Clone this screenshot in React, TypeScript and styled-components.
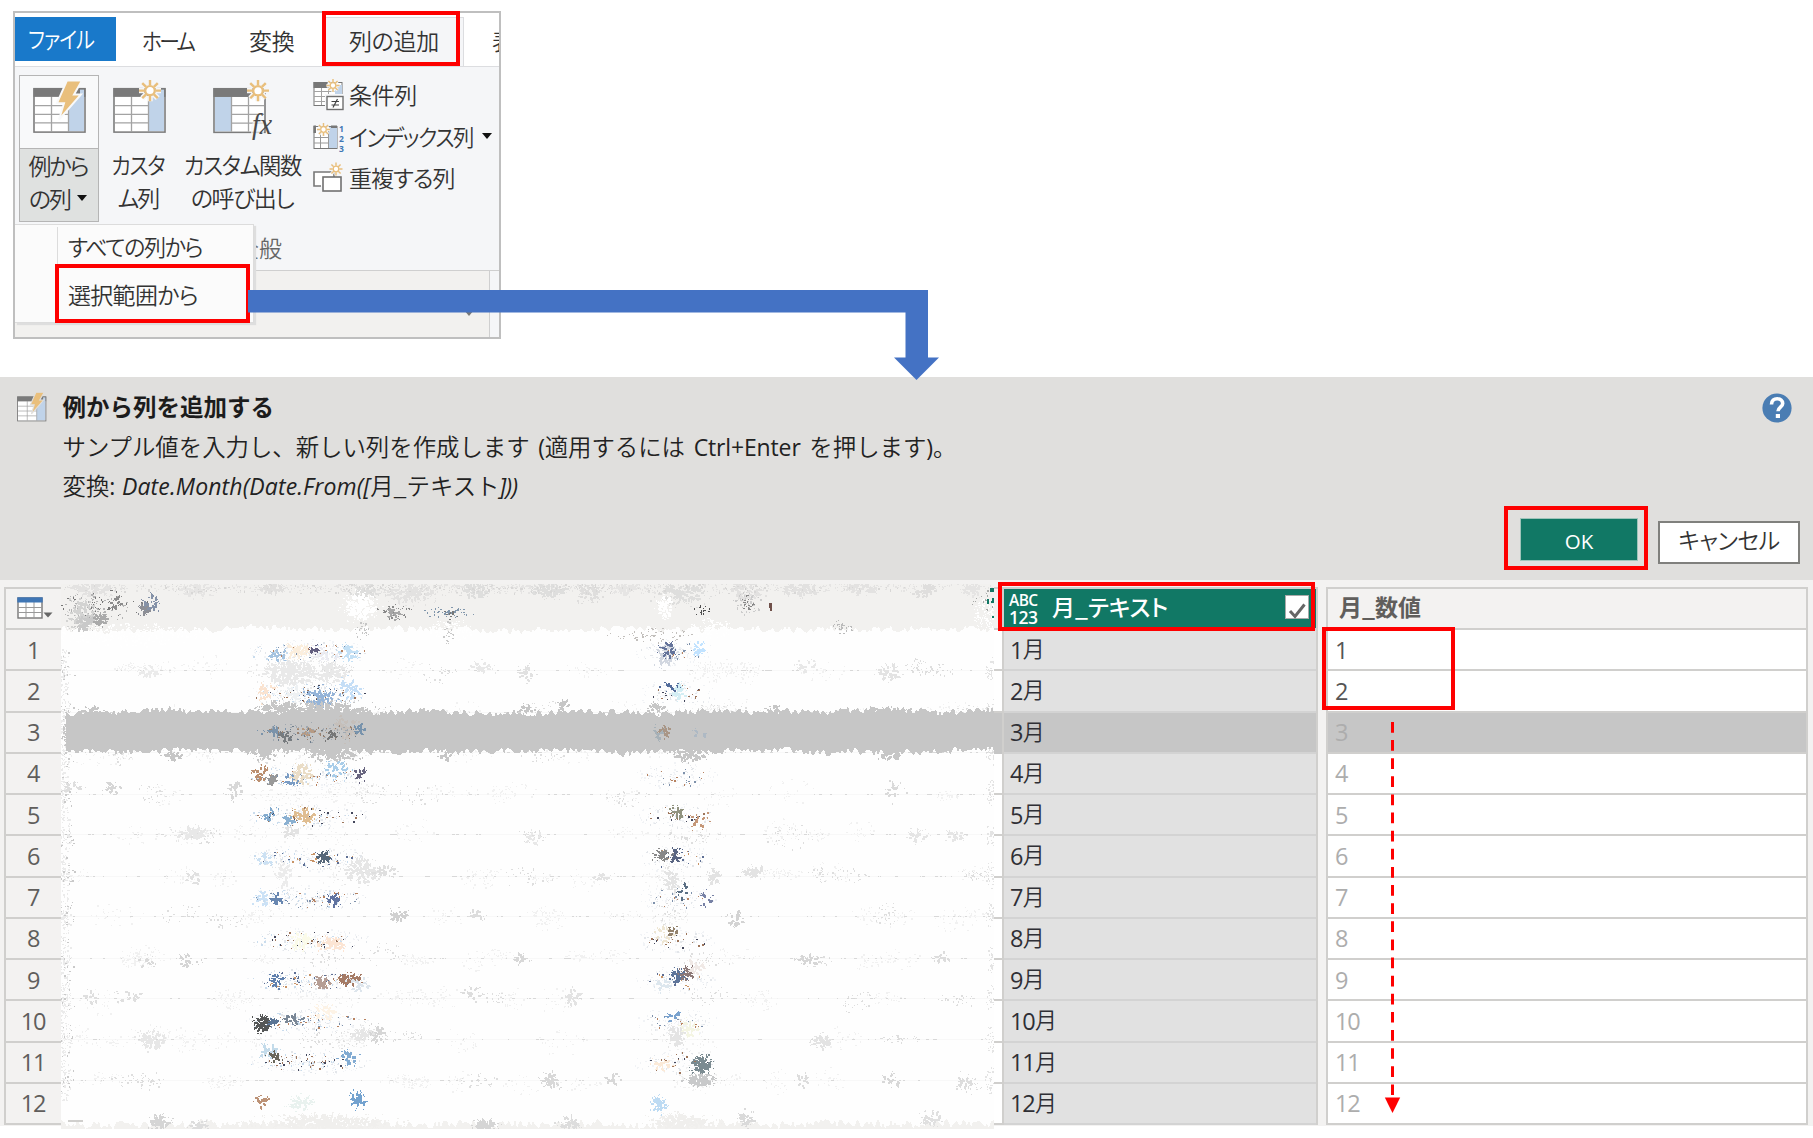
import React from "react";
import styled, { createGlobalStyle, css } from "styled-components";

const GlobalStyle = createGlobalStyle`
  * { box-sizing: border-box; }
  body { margin: 0; background: #fff; }
`;

const jp = `"Noto Sans CJK JP"`;
const ui = `"Open Sans", ${jp}, sans-serif`;

const Page = styled.div`
  position: relative;
  width: 1813px;
  height: 1138px;
  overflow: hidden;
  background: #fff;
  color: #333;
  font: 23px/32px ${jp}, sans-serif;
`;

const Label = styled.span<{ $ls?: number; $size?: number; $sx?: number; $center?: boolean }>`
  display: block;
  white-space: nowrap;
  font-weight: 350;
  font-size: ${(p) => p.$size ?? 23}px;
  letter-spacing: ${(p) => p.$ls ?? 0}px;
  font-feature-settings: "palt";
  ${(p) => p.$sx && css`transform: scaleX(${p.$sx}); transform-origin: ${p.$center ? "center" : "left"};`}
`;

const Marker = styled.div<{ $x: number; $y: number; $w: number; $h: number }>`
  position: absolute;
  left: ${(p) => p.$x}px;
  top: ${(p) => p.$y}px;
  width: ${(p) => p.$w}px;
  height: ${(p) => p.$h}px;
  border: 4px solid #fe0000;
  z-index: 3;
`;

const Overlay = styled.svg<{ $x: number; $y: number }>`
  position: absolute;
  left: ${(p) => p.$x}px;
  top: ${(p) => p.$y}px;
  z-index: 4;
`;

/* ---------- ribbon ---------- */

const Top = styled.section`
  height: 377px;
  padding: 11px 0 0 13px;
`;

const Ribbon = styled.div`
  position: relative;
  display: flex;
  flex-direction: column;
  width: 488px;
  height: 328px;
  border: 2px solid #bfbfbf;
  background: #f5f6f8;
  overflow: hidden;
`;

const Tabs = styled.div`
  display: flex;
  height: 54px;
  padding-top: 4px;
  background: #fff;
  border-bottom: 1px solid #dcdde0;
  overflow: hidden;
  flex: none;
`;

const Tab = styled.div<{ $w: number; $pad: number; $kind?: "file" | "active" }>`
  flex: none;
  width: ${(p) => p.$w}px;
  height: 50px;
  padding: 7px 0 0 ${(p) => p.$pad}px;
  ${(p) =>
    p.$kind === "file" &&
    css`height: 44px; padding-top: 5px; background: #1979ca; color: #fff;`}
  ${(p) =>
    p.$kind === "active" &&
    css`background: #f5f6f8; border: 1px solid #dcdde0; border-bottom: 0; padding-top: 6px;`}
`;

const Tools = styled.div`
  display: flex;
  height: 157px;
  padding: 8px 0 0 4px;
  flex: none;
`;

const Big = styled.div<{ $w: number; $selected?: boolean }>`
  display: flex;
  flex-direction: column;
  align-items: center;
  width: ${(p) => p.$w}px;
  height: 147px;
  border: 1px solid ${(p) => (p.$selected ? "#b5b5b5" : "transparent")};
  background: ${(p) => (p.$selected ? "#f8f9fa" : "transparent")};
  flex: none;
`;

const BigIcon = styled.div`
  height: 72px;
  padding: 4px 0 0 1px;
`;

const BigText = styled.div<{ $selected?: boolean }>`
  display: flex;
  flex-direction: column;
  align-items: center;
  align-self: stretch;
  height: 74px;
  line-height: 33px;
  padding-right: 2px;
  ${(p) => p.$selected && css`background: #dfe1e0; border-top: 1px solid #b5b5b5;`}
`;

const WithCaret = styled.div<{ $gap?: number }>`
  display: flex;
  align-items: center;
  gap: ${(p) => p.$gap ?? 7}px;
`;

const Caret = styled.i<{ $color?: string }>`
  width: 0;
  height: 0;
  border: 5px solid transparent;
  border-top: 6px solid ${(p) => p.$color ?? "#111"};
  border-bottom: 0;
`;

const SmallList = styled.div`
  display: flex;
  flex-direction: column;
  padding: 0 0 0 6px;
`;

const SmallItem = styled.div`
  display: flex;
  align-items: center;
  gap: 4px;
  height: 41.5px;

  & > svg {
    flex: none;
  }

  & > :not(svg) {
    margin-top: -3px;
  }
`;

const GroupName = styled.div`
  height: 47px;
  padding: 7px 0 0 221px;
  color: #666;
  border-bottom: 1px solid #cfcfcf;
  flex: none;
`;

const SheetStrip = styled.div`
  flex: 1;
  margin-right: 9px;
  padding: 39px 15px 0 0;
  display: flex;
  justify-content: flex-end;
  background: #f2f1ef;
  border-right: 1px solid #cfcfcf;
`;

const Menu = styled.div`
  position: absolute;
  left: 0;
  top: 211px;
  width: 239px;
  height: 99px;
  background: #fbfbfb;
  border: 1px solid #dcdcdc;
  border-left: 0;
  box-shadow: 2px 2px 1px #dedede;
  display: flex;
`;

const MenuGutter = styled.div`
  width: 43px;
  margin-top: 2px;
  border-right: 1px solid #dcdcdc;
`;

const MenuItems = styled.div`
  padding: 5px 0 0 10px;
`;

const MenuItem = styled.div`
  height: 48px;
`;

/* ---------- dialog panel ---------- */

const Panel = styled.section`
  display: flex;
  height: 203px;
  padding: 15px 13px 0 17px;
  background: #e0dfdd;
  color: #222;
`;

const PanelText = styled.div`
  margin: -2px 0 0 15.5px;
  flex: 1;
  font-family: ${jp}, sans-serif;
`;

const PanelTitle = styled.div`
  font: 700 23.5px/32px ${jp}, sans-serif;
  color: #1c1c1c;
`;

const PanelLine = styled.div`
  margin-top: 7.5px;
  height: 32px;
  white-space: nowrap;
  font-size: 23.4px;
  font-weight: 350;
  word-spacing: 3.5px;
`;

const Latin = styled.span<{ $ls?: number; $italic?: boolean }>`
  font-family: ${ui};
  font-weight: 400;
  font-size: 23px;
  letter-spacing: ${(p) => p.$ls ?? 0}px;
  font-style: ${(p) => (p.$italic ? "italic" : "normal")};
`;

const PanelSide = styled.div`
  display: flex;
  flex-direction: column;
  align-items: flex-end;
  padding-top: 1px;
`;

const HelpIcon = styled.div`
  margin-right: 8px;
  height: 30px;
`;

const Buttons = styled.div`
  display: flex;
  gap: 20px;
  margin-top: 95px;
`;

const Button = styled.button<{ $primary?: boolean }>`
  width: ${(p) => (p.$primary ? 118 : 142)}px;
  height: 43px;
  margin-top: ${(p) => (p.$primary ? 0 : 3)}px;
  padding: 0 0 5px;
  border: ${(p) => (p.$primary ? "1px solid #9fc4ba" : "2px solid #80807d")};
  background: ${(p) => (p.$primary ? "#117865" : "#fff")};
  color: ${(p) => (p.$primary ? "#fff" : "#333")};
  font: 20.5px/32px ${ui};
  display: flex;
  justify-content: center;
  align-items: center;
  ${(p) => p.$primary && css`padding: 3px 0 0;`}
`;

/* ---------- data grid ---------- */

const Grid = styled.section`
  display: flex;
  height: 549px;
  padding: 7px 0 0 4px;
  background: linear-gradient(#f3f2f1 0 546px, #fff 546px);
`;

const Column = styled.div<{ $w: number }>`
  display: flex;
  flex-direction: column;
  flex: none;
  width: ${(p) => p.$w}px;
  height: 538px;
  border: 2px solid #d0cfcd;
  border-bottom-width: 0;
`;

const NumberColumn = styled(Column)`
  border-right: 0;
`;

const StubColumn = styled(Column)`
  border-left: 0;
  border-right: 0;
`;

const ValueColumn = styled(Column)`
  margin-left: 8px;
`;

const HeadCell = styled.div<{ $green?: boolean }>`
  display: flex;
  align-items: center;
  height: 41px;
  flex: none;
  border-bottom: 2px solid #d0cfcd;
  ${(p) => p.$green && css`background: #117865; color: #fff;`}
`;

const GutterIcon = styled.div`
  display: flex;
  padding-left: 11px;
`;

const Cell = styled.div<{ $bg: string; $line?: string; $color?: string; $center?: boolean; $pad?: number }>`
  flex: 1;
  display: flex;
  align-items: center;
  justify-content: ${(p) => (p.$center ? "center" : "flex-start")};
  padding-left: ${(p) => p.$pad ?? 0}px;
  padding-right: ${(p) => (p.$center ? 1 : 0)}px;
  border-bottom: 2px solid ${(p) => p.$line ?? "#d0cfcd"};
  background: ${(p) => p.$bg};
  color: ${(p) => p.$color ?? "#2f2f35"};
`;

const Num = styled.span`
  font: 23.5px/32px ${ui};
  letter-spacing: -1.2px;
`;

const Month = styled.span`
  margin: -5px 0 0 0.5px;
  font-size: 22px;
  font-weight: 350;
`;

const TypeTag = styled.div`
  width: 32px;
  margin-left: 5px;
  padding-top: 1px;
`;

const TypeLine = styled.div<{ $digits?: boolean }>`
  height: ${(p) => (p.$digits ? 18 : 15)}px;
  font: 600 ${(p) => (p.$digits ? 17.5 : 15.5)}px/${(p) => (p.$digits ? 18 : 15)}px ${ui};
  letter-spacing: ${(p) => (p.$digits ? -0.5 : -0.6)}px;
`;

const HeadName = styled.div<{ $bold?: boolean }>`
  flex: 1;
  margin-left: 11px;
  padding-bottom: 5px;
  white-space: nowrap;
  font: ${(p) => (p.$bold ? 700 : 500)} 23px/32px ${jp}, sans-serif;
  color: ${(p) => (p.$bold ? "#605e5c" : "#fff")};
  font-feature-settings: "palt";
`;

const Check = styled.div`
  width: 24px;
  height: 24px;
  margin: 0 7px 3px 0;
  background: #fff;
  border: 1px solid #aaa;
`;

const Scrub = styled.svg`
  display: block;
  flex: none;
  margin-top: -3px;
`;

/* ---------- icons ---------- */

const Burst = ({ x, y, r, bg = "#f5f6f8" }: { x: number; y: number; r: number; bg?: string }) => {
  const rays = Array.from({ length: 8 }, (_, i) => {
    const a = (i * Math.PI) / 4;
    const c = Math.cos(a);
    const s = Math.sin(a);
    return `M${x + c * r * 0.5} ${y + s * r * 0.5}L${x + c * r} ${y + s * r}`;
  }).join("");
  return (
    <g fill="none">
      <path d={rays} stroke={bg} strokeWidth={r * 0.5} />
      <circle cx={x} cy={y} r={r * 0.45} fill={bg} />
      <path d={rays} stroke="#e9bf7c" strokeWidth={r * 0.22} />
      <circle cx={x} cy={y} r={r * 0.43} stroke="#e9bf7c" strokeWidth={r * 0.2} fill="#fff" />
    </g>
  );
};

const TableShape = ({ left }: { left?: boolean }) => (
  <g>
    <rect x="1" y="9" width="51" height="45" fill="#fff" />
    <rect x={left ? 2 : 35} y="17" width="16" height="36" fill="#c0d3e9" />
    <path
      d={left ? "M18 26.5H51M18 35.5H51M18 44.5H51M18.5 17V53M35.5 17V53" : "M2 26.5H35M2 35.5H35M2 44.5H35M18.5 17V53M35.5 17V53"}
      stroke="#a3a3a3"
      strokeWidth="1.3"
    />
    <rect x="1" y="9" width="51" height="45" fill="none" stroke="#7c7c7c" strokeWidth="1.6" />
    <rect x="0.5" y="8.5" width="52" height="9" fill="#7a7a7a" />
  </g>
);

const Bolt = ({ bg = "#f8f9fa" }: { bg?: string }) => (
  <path d="M34 0.500H49L41 15H48L26 41L31 24H24Z" fill="#e9bf7c" stroke={bg} strokeWidth="2" />
);

const BoltTable = ({ size = 54, bg }: { size?: number; bg?: string }) => (
  <svg width={size} height={(size * 55) / 54} viewBox="0 0 54 57" preserveAspectRatio="none">
    <TableShape />
    <rect x="47" y="10" width="4" height="9" fill="#c0d3e9" />
    <Bolt bg={bg} />
  </svg>
);

const BurstTable = () => (
  <svg width="54" height="55" viewBox="0 0 54 57" preserveAspectRatio="none">
    <TableShape />
    <rect x="36" y="10" width="15" height="12" fill="#c0d3e9" />
    <Burst x={37} y={11} r={11} />
  </svg>
);

const FxText = styled.text`
  font: italic 30px "Liberation Serif", serif;
  fill: #4a4a4a;
`;

const IndexText = styled.text`
  font: 700 8.5px "Open Sans", sans-serif;
  fill: #3f76b5;
`;

const FxTable = () => (
  <svg width="61" height="64" viewBox="0 0 61 66" preserveAspectRatio="none">
    <TableShape left />
    <Burst x={45} y={11} r={11} />
    <path d="M38 66V48l5-11h8v29z" fill="#f5f6f8" opacity="0.7" />
    <FxText x="39" y="56" textLength="20" lengthAdjust="spacingAndGlyphs">fx</FxText>
  </svg>
);

const ConditionIcon = () => (
  <svg width="32" height="33" viewBox="0 0 32 33">
    <rect x="1" y="3.500" width="28" height="23" fill="#fff" stroke="#777" />
    <path d="M1 12.500H28M1 17.500H28M1 22.500H28M8.500 8V26M15.500 8V26" stroke="#a3a3a3" />
    <rect x="22" y="6" width="7" height="10" fill="#c0d3e9" />
    <rect x="0.500" y="3" width="14" height="6" fill="#777" />
    <Burst x={20} y={6.500} r={6.500} />
    <rect x="13" y="16" width="18" height="16" fill="#fff" stroke="#f5f6f8" strokeWidth="2" />
    <rect x="14" y="17.500" width="16" height="13" fill="#fff" stroke="#707070" strokeWidth="1.400" />
    <path d="M18.500 22.500H26M18.500 26H26M24.500 20L20 28.500" stroke="#444" strokeWidth="1.200" />
  </svg>
);

const IndexIcon = () => (
  <svg width="32" height="33" viewBox="0 0 32 33">
    <rect x="1" y="5.500" width="23" height="22" fill="#fff" stroke="#777" />
    <rect x="16" y="6" width="8" height="21" fill="#c0d3e9" />
    <path d="M1 16.500H16M1 22H16M7.500 10V27M15.500 10V27" stroke="#999" />
    <path d="M0.500 4.500H3V12H0.500ZM18 4.500H24V7H18Z" fill="#777" />
    <Burst x={10.500} y={8.500} r={6.500} />
    <IndexText x="26" y="10.500">1</IndexText>
    <IndexText x="26" y="20.500">2</IndexText>
    <IndexText x="26" y="30.500">3</IndexText>
  </svg>
);

const DuplicateIcon = () => (
  <svg width="32" height="33" viewBox="0 0 32 33">
    <path d="M8 24H1V10H21V16" fill="#fff" stroke="#777" strokeWidth="1.600" />
    <rect x="10" y="15" width="18" height="14" fill="#fff" stroke="#707070" strokeWidth="1.600" />
    <Burst x={23} y={7} r={6.500} />
  </svg>
);

const GridIcon = () => (
  <svg width="36" height="24" viewBox="0 0 36 24">
    <rect x="1" y="1" width="24" height="20" fill="#fff" stroke="#777" strokeWidth="1.400" />
    <path d="M1 10.500H25M1 15.500H25M9 5V21M17 5V21" stroke="#999" />
    <rect x="0.300" y="0.300" width="25.400" height="5.200" fill="#3f76b5" />
    <path d="M26.500 15.500H35.500L31 20.500Z" fill="#666" />
  </svg>
);

/* ---------- scrubbed region ---------- */

const lines = [629, 670, 712, 752, 794, 834, 876, 916, 958, 998, 1039, 1080];

function makeRandom(seed: number) {
  let s = seed;
  return () => {
    s = (s * 1664525 + 1013904223) >>> 0;
    return s / 4294967296;
  };
}

type Blob = [x: number, y: number, rx: number, ry: number, n: number, color: string];

/* scattered pixels, denser toward the centre of the spot */
function specks([x, y, rx, ry, n]: Blob, rnd: () => number) {
  let d = "";
  for (let i = 0; i < n; i++) {
    const a = rnd() * Math.PI * 2;
    const r = Math.pow(rnd(), 0.7);
    const px = Math.round(x + Math.cos(a) * rx * r);
    const py = Math.round(y + Math.sin(a) * ry * r);
    const w = rnd() > 0.7 ? 2 : 1;
    const h = rnd() > 0.7 ? 2 : 1;
    d += `M${px} ${py}h${w}v${h}h${-w}z`;
  }
  return d;
}

/* ragged flake: thin branches of small squares around the centre, with loose crumbs */
function flake(blob: Blob, rnd: () => number) {
  const [x, y, rx, ry, n] = blob;
  let d = "";
  for (let i = 0; i < n; i++) {
    const a = rnd() * Math.PI * 2;
    const r = Math.pow(rnd(), 0.75) * 0.8;
    let px = x + Math.cos(a) * rx * r;
    let py = y + Math.sin(a) * ry * r;
    const dir = a + (rnd() - 0.5) * 1.4;
    const steps = 2 + Math.floor(rnd() * 3);
    for (let t = 0; t < steps; t++) {
      const w = t < 2 ? 2 : 1;
      d += `M${Math.round(px)} ${Math.round(py)}h${w}v${w}h${-w}z`;
      px += Math.cos(dir) * 1.2;
      py += Math.sin(dir) * 1.2;
    }
  }
  return d + specks([x, y, rx * 1.35, ry * 1.3, Math.round(n * 0.7), ""], rnd);
}

function jagged(y0: number, y1: number, amp: number, rnd: () => number, left = 61) {
  const edge = (y: number) => {
    const pts: string[] = [];
    let drift = 0;
    for (let x = left; x <= 996; x += 2) {
      drift = drift * 0.93 + (rnd() - 0.5) * 1.4;
      pts.push(`${x} ${(y + drift + (rnd() - 0.5) * amp).toFixed(1)}`);
    }
    return pts;
  };
  return `M${edge(y0).join("L")}L${edge(y1).reverse().join("L")}Z`;
}

const flakes: Blob[] = [
  [290, 672, 32, 14, 190, "#e9e9e9"], [330, 672, 18, 11, 70, "#e9e9e9"],
  [82, 613, 16, 15, 60, "#d3d3d2"], [85, 622, 11, 8, 34, "#c9c9c9"], [99, 619, 9, 6, 20, "#aaa"],
  [115, 602, 6, 7, 9, "#8b8b8b"], [143, 609, 6, 5, 18, "#8d8f96"], [151, 602, 8, 9, 17, "#8592a8"],
  [360, 606, 17, 14, 110, "#fff"], [393, 613, 7, 6, 13, "#a6a6a6"], [665, 606, 8, 12, 40, "#fff"],
  [277, 654, 10, 6, 14, "#a5c3e0"], [296, 650, 13, 9, 34, "#fbeedd"], [313, 650, 6, 5, 10, "#615d7e"],
  [325, 653, 16, 8, 22, "#ececf2"],
  [347, 652, 11, 8, 22, "#c3e0f5"], [266, 692, 11, 10, 19, "#fae3d0"],
  [320, 697, 18, 11, 58, "#95b4d8"], [350, 688, 12, 12, 26, "#c5def6"], [293, 694, 10, 12, 22, "#eef1f3"],
  [260, 773, 9, 7, 22, "#bb8f70"], [271, 779, 6, 5, 14, "#999"], [291, 779, 10, 6, 19, "#7a9cc4"],
  [302, 773, 11, 11, 34, "#eaddc7"], [336, 769, 12, 10, 20, "#a9cde9"], [359, 774, 6, 8, 9, "#696680"],
  [303, 815, 11, 8, 34, "#dfbd91"], [289, 819, 7, 6, 12, "#8ab0d1"], [269, 813, 8, 7, 10, "#82aacd"],
  [323, 857, 6, 7, 20, "#566779"], [264, 858, 10, 6, 13, "#cce1f3"], [360, 870, 20, 14, 84, "#e6e6e6"],
  [385, 871, 17, 6, 22, "#dfdfdf"], [283, 873, 8, 17, 34, "#ececec"],
  [276, 898, 8, 6, 12, "#6887b1"], [262, 898, 9, 8, 17, "#cce2f6"], [333, 900, 6, 7, 14, "#6073a0"],
  [330, 943, 16, 7, 36, "#fce5d4"], [300, 940, 14, 9, 30, "#fbfbe9"], [275, 979, 8, 7, 14, "#6080ad"],
  [321, 982, 9, 7, 20, "#b59e95"], [348, 979, 13, 6, 38, "#a57b66"], [360, 983, 12, 9, 16, "#dde5ec"],
  [261, 1023, 9, 9, 38, "#555757"], [272, 1022, 6, 3, 9, "#5b7595"], [293, 1019, 10, 6, 13, "#7a8796"],
  [325, 1012, 14, 8, 22, "#fdf3e6"],
  [266, 1050, 12, 12, 20, "#c3dbea"], [274, 1057, 7, 6, 12, "#69675b"], [348, 1057, 9, 7, 19, "#82abd2"],
  [357, 1100, 9, 9, 30, "#73a2cf"], [260, 1101, 7, 6, 10, "#bc9276"], [300, 1102, 14, 8, 26, "#e9f2ef"],
  [664, 654, 13, 11, 34, "#d2d7e0"], [668, 650, 9, 8, 14, "#64739a"], [698, 648, 7, 9, 16, "#c2e3ff"],
  [670, 687, 9, 5, 8, "#536c9b"], [678, 693, 8, 10, 18, "#d3eef4"],
  [676, 812, 6, 7, 16, "#91937f"], [698, 819, 11, 9, 9, "#c59778"],
  [664, 855, 11, 6, 20, "#888"], [674, 855, 6, 7, 14, "#596582"], [671, 880, 9, 14, 34, "#e4e4e4"],
  [681, 890, 7, 10, 6, "#5b6f84"], [704, 896, 9, 10, 7, "#7781a5"],
  [664, 934, 11, 8, 14, "#eee6d3"], [672, 931, 5, 5, 7, "#92826d"],
  [678, 974, 8, 7, 18, "#5e759a"], [687, 973, 10, 7, 17, "#8d7978"], [663, 984, 9, 6, 16, "#dde7ee"],
  [696, 966, 10, 8, 20, "#f0e9e6"],
  [673, 1015, 8, 8, 9, "#7aa2ce"], [676, 1034, 10, 12, 40, "#e4e4e4"], [689, 1028, 9, 9, 18, "#f4f5e3"],
  [701, 1064, 10, 9, 52, "#7b8b91"], [700, 1079, 14, 7, 66, "#c8c9ca"],
  [661, 1063, 10, 7, 16, "#fbead8"], [658, 1104, 8, 8, 22, "#bddbf3"],
  [111, 787, 8, 6, 12, "#d6d6d6"], [72, 787, 12, 6, 12, "#dedede"], [234, 789, 9, 11, 18, "#d8d8d8"],
  [190, 833, 22, 7, 48, "#e8e8e8"], [290, 832, 8, 7, 16, "#e3e3e3"], [148, 671, 14, 5, 18, "#ebebeb"],
  [480, 668, 13, 7, 18, "#e8e8e8"], [526, 673, 8, 8, 15, "#e1e1e1"], [889, 672, 12, 9, 24, "#e3e3e3"],
  [806, 666, 10, 6, 11, "#e8e8e8"], [894, 791, 11, 10, 9, "#dadada"], [917, 835, 10, 8, 16, "#e5e5e5"],
  [955, 835, 9, 7, 13, "#e6e6e6"], [534, 837, 11, 7, 10, "#e8e8e8"], [194, 878, 10, 8, 11, "#e1e1e1"],
  [754, 871, 13, 7, 24, "#e3e3e3"], [602, 875, 11, 5, 9, "#e3e3e3"], [713, 876, 7, 8, 20, "#e3e3e3"],
  [398, 914, 9, 7, 18, "#d0d0d0"], [475, 914, 9, 5, 9, "#ddd"], [736, 919, 9, 9, 16, "#d3d3d3"],
  [188, 960, 11, 8, 12, "#d5d5d5"], [145, 962, 9, 7, 8, "#dadada"], [520, 958, 9, 6, 10, "#d8d8d8"],
  [808, 959, 12, 5, 17, "#d6d6d6"], [940, 956, 10, 6, 9, "#ddd"], [573, 997, 9, 9, 18, "#e3e3e3"],
  [90, 997, 8, 7, 9, "#dfdfdf"], [130, 996, 13, 7, 10, "#dfdfdf"], [470, 992, 9, 7, 9, "#ddd"],
  [152, 1038, 14, 10, 46, "#e7e7e7"], [376, 1033, 8, 9, 20, "#d6d6d6"], [362, 1033, 13, 8, 30, "#e6e6e6"],
  [821, 1042, 9, 8, 26, "#e3e3e3"], [550, 1080, 11, 8, 24, "#d8d8d8"], [612, 1079, 9, 6, 9, "#d8d8d8"],
  [891, 1080, 11, 7, 10, "#d8d8d8"], [964, 1081, 9, 8, 12, "#ddd"], [802, 1080, 8, 7, 9, "#ddd"],
];

const headFlakes: Blob[] = [
  [90, 588, 25, 8, 60, "#e3e2e1"], [195, 589, 18, 8, 45, "#e6e5e4"], [270, 588, 14, 6, 32, "#e0dfde"],
  [365, 590, 16, 9, 40, "#dededd"], [410, 592, 28, 10, 90, "#e3e2e1"], [475, 590, 14, 9, 40, "#dededd"],
  [550, 590, 22, 8, 55, "#dededd"], [588, 592, 12, 10, 35, "#dfdedd"], [625, 588, 15, 7, 30, "#e6e5e4"],
  [680, 593, 26, 12, 85, "#dededd"], [745, 590, 18, 10, 45, "#e2e1e0"], [800, 589, 20, 8, 50, "#e2e1e0"],
  [860, 588, 18, 6, 35, "#e3e2e1"], [925, 590, 13, 7, 30, "#dfdedd"], [970, 590, 12, 7, 25, "#e5e4e3"],
];

const footFlakes: Blob[] = [
  [160, 1122, 11, 7, 40, "#d5d5d5"], [198, 1124, 9, 5, 18, "#ddd"], [484, 1124, 13, 5, 34, "#d5d5d5"],
  [569, 1122, 12, 6, 25, "#ddd"], [325, 1122, 65, 8, 220, "#f0efed"], [678, 1121, 34, 8, 120, "#f0efed"],
  [745, 1118, 8, 8, 20, "#dadada"], [930, 1118, 11, 7, 20, "#e0e0e0"],
];

const bandFlakes: Blob[] = [
  [325, 712, 56, 11, 260, "#c6c6c6"], [280, 708, 22, 8, 60, "#c6c6c6"], [330, 754, 28, 8, 80, "#c6c6c6"],
  [265, 753, 16, 7, 30, "#c6c6c6"],
  [172, 755, 10, 5, 20, "#c6c6c6"], [563, 704, 5, 6, 13, "#c6c6c6"], [525, 708, 8, 4, 12, "#c6c6c6"],
  [690, 754, 18, 7, 50, "#c6c6c6"], [655, 708, 10, 5, 16, "#c6c6c6"], [775, 709, 9, 4, 14, "#c6c6c6"],
  [890, 756, 10, 4, 16, "#c6c6c6"], [445, 756, 6, 4, 10, "#c6c6c6"], [90, 711, 12, 5, 16, "#c6c6c6"],
  [885, 710, 25, 4, 30, "#c6c6c6"],
  [273, 731, 13, 5, 16, "#7b93aa"], [285, 736, 6, 5, 14, "#777b7e"], [307, 731, 11, 4, 14, "#b69a83"],
  [328, 735, 9, 5, 9, "#777"], [345, 728, 14, 12, 34, "#c5bfba"], [359, 730, 6, 6, 12, "#7893ac"],
  [664, 731, 6, 6, 15, "#a99686"], [658, 733, 8, 7, 7, "#a6b1b8"], [699, 732, 8, 6, 5, "#aeb9c4"],
];

const rowDots: Blob[] = lines.slice(1).flatMap((y, i) => {
  const tone = ["#7e91ab", "#9d755b", "#5e6f94"][i % 3];
  const warm = ["#b78260", "#44475c", "#c89366"][i % 3];
  const cy = y - 18;
  return [
    [308, cy, 62, 14, 110, "#f1f3f6"],
    [308, cy, 58, 12, 60, "#e3e6ea"],
    [308, cy, 55, 9, 26, tone],
    [315, cy, 52, 9, 20, warm],
    [300, cy, 52, 10, 30, "#c9dced"],
    [676, cy, 42, 14, 80, "#f1f3f6"],
    [676, cy, 36, 12, 36, "#e3e6ea"],
    [676, cy, 32, 10, 14, tone],
    [676, cy, 32, 9, 10, warm],
  ] as Blob[];
});

function Scrubbed() {
  const rnd = makeRandom(20231);
  const grey: React.ReactNode[] = [];
  lines.slice(1).forEach((y, i) => {
    let dash = "";
    for (let k = 0; k < 70; k++) {
      const w = 1 + Math.floor(rnd() * 3);
      dash += `M${62 + Math.floor(rnd() * 930)} ${y}h${w}v1h${-w}z`;
    }
    grey.push(<path key={`l${i}`} d={`M62 ${y}h930v1h-930z`} fill="#f8f8f8" />);
    grey.push(<path key={`d${i}`} d={dash} fill="#d8d8d8" />);
    for (let k = 0; k < 18; k++) {
      const spot: Blob = [70 + rnd() * 915, y + (rnd() - 0.5) * 8, 12 + rnd() * 18, 5 + rnd() * 9, 26, ""];
      grey.push(<path key={`s${i}-${k}`} d={specks(spot, rnd)} fill={k % 5 ? "#f1f1f1" : "#dedede"} />);
    }
    grey.push(<path key={`e${i}`} d={specks([63, y, 8, 22, 90, ""], rnd)} fill="#ebebeb" />);
    grey.push(<path key={`f${i}`} d={specks([65, y, 10, 20, 14, ""], rnd)} fill="#c9c9c9" />);
    grey.push(<path key={`r${i}`} d={specks([991, y, 6, 14, 34, ""], rnd)} fill="#e4e4e4" />);
  });
  const draw = (list: Blob[], prefix: string) =>
    list.map((b, i) => <path key={prefix + i} d={flake(b, rnd)} fill={b[5]} />);
  return (
    <Scrub width="933" height="545" viewBox="61 584 933 545" shapeRendering="crispEdges">
      <rect x="61" y="584" width="933" height="545" fill="#fefefe" />
      <path d={jagged(570, 629, 7, rnd)} fill="#f2f1ef" />
      <path d={specks([530, 586, 470, 7, 1200, ""], rnd)} fill="#e5e4e3" />
      {draw(headFlakes, "h")}
      <path d={specks([480, 588, 430, 6, 260, ""], rnd)} fill="#d8d7d6" />
      <path d={specks([130, 634, 80, 12, 300, ""], rnd)} fill="#fff" />
      <path d={specks([450, 630, 22, 12, 130, ""], rnd)} fill="#fff" />
      <path d={specks([710, 628, 22, 10, 110, ""], rnd)} fill="#fff" />
      <path d={specks([95, 607, 34, 16, 110, ""], rnd)} fill="#b4b4b4" />
      <path d={specks([100, 603, 50, 14, 45, ""], rnd)} fill="#777" />
      <path d={specks([393, 612, 20, 8, 40, ""], rnd)} fill="#888" />
      <path d={specks([447, 612, 28, 6, 45, ""], rnd)} fill="#8297ac" />
      <path d={specks([451, 613, 8, 7, 12, ""], rnd)} fill="#777" />
      <path d={specks([448, 632, 6, 12, 20, ""], rnd)} fill="#c9c9c9" />
      <path d={specks([362, 631, 7, 9, 24, ""], rnd)} fill="#c5c5c5" />
      <path d={specks([701, 610, 9, 6, 18, ""], rnd)} fill="#4f4f4f" />
      <path d={specks([747, 601, 7, 11, 26, ""], rnd)} fill="#888" />
      <path d={specks([747, 601, 14, 14, 50, ""], rnd)} fill="#ccc" />
      <path d={specks([650, 635, 45, 8, 60, ""], rnd)} fill="#c2bfbc" />
      <path d={specks([843, 626, 10, 8, 30, ""], rnd)} fill="#bbb" />
      <path d="M769 603h3v8h-2v-3h-1z" fill="#70504a" />
      <path d={jagged(1124, 1140, 9, rnd)} fill="#f2f1ef" />
      {draw(footFlakes, "t")}
      <path d="M68 1120h15v2h-15z" fill="#d0cfcd" />
      {grey}
      {rowDots.map((b, i) => <path key={i} d={specks(b, rnd)} fill={b[5]} />)}
      {draw(flakes, "f")}
      <path d={jagged(712, 751, 7, rnd, 66)} fill="#c6c6c6" />
      <path d={specks([66, 732, 4, 18, 90, ""], rnd)} fill="#c6c6c6" />
      {draw(bandFlakes, "b")}
      <path d={specks([308, 732, 52, 10, 60, ""], rnd)} fill="#a0a8b0" />
      <path d={specks([308, 732, 52, 9, 20, ""], rnd)} fill="#6d7c8b" />
      <path d={specks([315, 732, 50, 9, 30, ""], rnd)} fill="#9b8371" />
      <path d={specks([985, 614, 12, 15, 110, ""], rnd)} fill="#fff" />
      <path d={specks([982, 600, 12, 14, 16, ""], rnd)} fill="#a8aaa8" />
      <path d="M990 588h4v4h-2v4h-3v5h3v-3h2v5h-3v-2h-2v3h-2v-5h2v-3h3v-4h-2zM992 616h2v2h-2z" fill="#117865" />
    </Scrub>
  );
}

const rows = Array.from({ length: 12 }, (_, i) => i + 1);

export default function App() {
  return (
    <Page>
      <GlobalStyle />
      <Top>
        <Ribbon>
          <Tabs>
            <Tab $w={101} $pad={13} $kind="file"><Label $sx={0.88} $ls={-1.2}>ファイル</Label></Tab>
            <Tab $w={107} $pad={26}><Label $sx={0.9} $ls={-3}>ホーム</Label></Tab>
            <Tab $w={101} $pad={26}><Label $ls={-0.3}>変換</Label></Tab>
            <Tab $w={140} $pad={24} $kind="active"><Label $ls={-0.3}>列の追加</Label></Tab>
            <Tab $w={60} $pad={28}><Label>表</Label></Tab>
          </Tabs>
          <Tools>
            <Big $w={80} $selected>
              <BigIcon><BoltTable /></BigIcon>
              <BigText $selected>
                <Label $ls={-2}>例から</Label>
                <WithCaret><Label $ls={-2}>の列</Label><Caret /></WithCaret>
              </BigText>
            </Big>
            <Big $w={80}>
              <BigIcon><BurstTable /></BigIcon>
              <BigText><Label $sx={0.92} $center $ls={-1.5}>カスタ</Label><Label $ls={-2}>ム列</Label></BigText>
            </Big>
            <Big $w={128}>
              <BigIcon><FxTable /></BigIcon>
              <BigText><Label $sx={0.97} $center $ls={-1.5}>カスタム関数</Label><Label $ls={-1.5}>の呼び出し</Label></BigText>
            </Big>
            <SmallList>
              <SmallItem><ConditionIcon /><Label $ls={-0.4}>条件列</Label></SmallItem>
              <SmallItem><IndexIcon /><WithCaret $gap={0}><Label $sx={0.93} $ls={-1.5}>インデックス列</Label><Caret /></WithCaret></SmallItem>
              <SmallItem><DuplicateIcon /><Label $ls={-1}>重複する列</Label></SmallItem>
            </SmallList>
          </Tools>
          <GroupName><Label>全般</Label></GroupName>
          <SheetStrip><Caret $color="#777" /></SheetStrip>
          <Menu>
            <MenuGutter />
            <MenuItems>
              <MenuItem><Label $sx={0.96} $ls={-1.5}>すべての列から</Label></MenuItem>
              <MenuItem><Label $ls={-0.7}>選択範囲から</Label></MenuItem>
            </MenuItems>
          </Menu>
        </Ribbon>
      </Top>

      <Panel>
        <BoltTable size={30} bg="#e0dfdd" />
        <PanelText>
          <PanelTitle>例から列を追加する</PanelTitle>
          <PanelLine>
            サンプル値を入力し、新しい列を作成します <Latin $ls={-0.5}>(</Latin>適用するには <Latin $ls={-0.15}>Ctrl+Enter</Latin> を押します<Latin>)</Latin>。
          </PanelLine>
          <PanelLine>
            変換<Latin $ls={-1.4}>: </Latin><Latin $italic $ls={0.12}>Date.Month(Date.From([</Latin>月_テキスト<Latin $italic $ls={-0.6}>]))</Latin>
          </PanelLine>
        </PanelText>
        <PanelSide>
          <HelpIcon>
            <svg width="30" height="30" viewBox="0 0 30 30">
              <circle cx="15" cy="15" r="14.600" fill="#4a7db3" />
              <path d="M9.500 11.500C9.500 7.500 12 5.800 15.200 5.800C18.500 5.800 20.700 7.600 20.700 10.400C20.700 14 16 14.200 16 18.200" fill="none" stroke="#fff" strokeWidth="3.600" />
              <rect x="13.800" y="21" width="4.200" height="4" fill="#fff" />
            </svg>
          </HelpIcon>
          <Buttons>
            <Button $primary>OK</Button>
            <Button><Label $ls={-0.6}>キャンセル</Label></Button>
          </Buttons>
        </PanelSide>
      </Panel>

      <Grid>
        <NumberColumn $w={57}>
          <HeadCell><GutterIcon><GridIcon /></GutterIcon></HeadCell>
          {rows.map((n) => <Cell key={n} $center $bg="#f3f2f1" $color="#605e5c"><Num>{n}</Num></Cell>)}
        </NumberColumn>
        <Scrubbed />
        <StubColumn $w={8}>
          <HeadCell />
          {rows.map((n) => <Cell key={n} $bg={n === 3 ? "#c6c6c6" : "#fff"} $line={n === 3 ? "#c6c6c6" : undefined} />)}
        </StubColumn>
        <Column $w={316}>
          <HeadCell $green>
            <TypeTag><TypeLine>ABC</TypeLine><TypeLine $digits>123</TypeLine></TypeTag>
            <HeadName>月_テキスト</HeadName>
            <Check>
              <svg width="22" height="22" viewBox="0 0 22 22"><path d="M4 11L9 16.500L18.500 4.500" fill="none" stroke="#666" strokeWidth="3" /></svg>
            </Check>
          </HeadCell>
          {rows.map((n) => (
            <Cell key={n} $pad={6} $bg={n === 3 ? "#c6c6c6" : "#e1e1e1"} $line="#d3d3d3"><Num>{n}</Num><Month>月</Month></Cell>
          ))}
        </Column>
        <ValueColumn $w={482}>
          <HeadCell><HeadName $bold>月_数値</HeadName></HeadCell>
          {rows.map((n) => (
            <Cell key={n} $pad={7} $bg={n === 3 ? "#c6c6c6" : "#fff"} $color={n < 3 ? "#555" : "#adadad"}><Num>{n}</Num></Cell>
          ))}
        </ValueColumn>
      </Grid>

      <Marker $x={322} $y={11} $w={138} $h={55} />
      <Marker $x={55} $y={264} $w={195} $h={59} />
      <Marker $x={1504} $y={506} $w={144} $h={64} />
      <Marker $x={998} $y={582} $w={317} $h={49} />
      <Marker $x={1322} $y={627} $w={133} $h={83} />
      <Overlay $x={248} $y={290} width="692" height="91">
        <path d="M0 0H680V67.500H691L668.500 90L646 67.500H657.500V22.400H0Z" fill="#4472c4" />
      </Overlay>
      <Overlay $x={1384} $y={722} width="18" height="392">
        <path d="M8.500 0V376" stroke="#fe0000" strokeWidth="3" strokeDasharray="10.700 7.420" />
        <path d="M0.800 375.500H16.200L8.500 391Z" fill="#fe0000" />
      </Overlay>
    </Page>
  );
}
